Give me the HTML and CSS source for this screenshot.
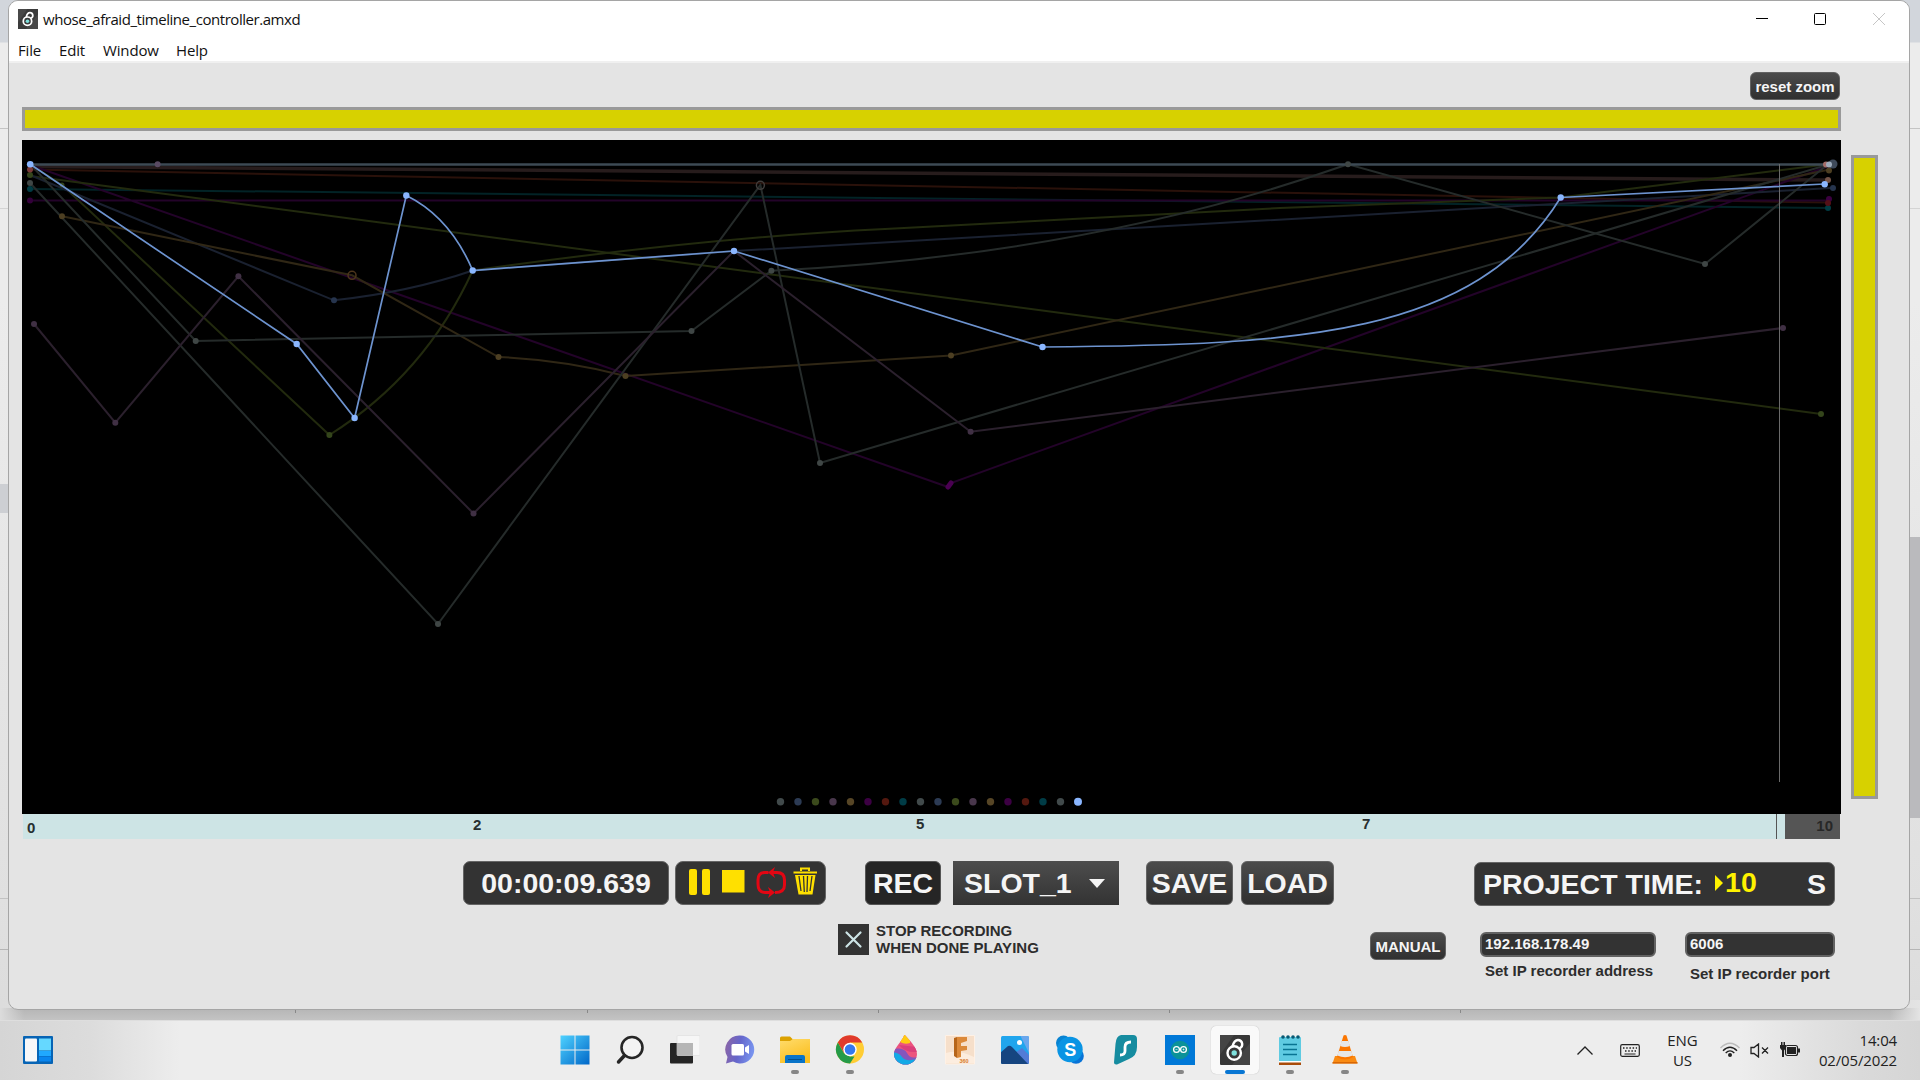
FILE: index.html
```html
<!DOCTYPE html>
<html lang="en">
<head>
<meta charset="utf-8">
<title>whose_afraid_timeline_controller.amxd</title>
<link rel="stylesheet" href="styles.css">
</head>
<body>
<main class="desktop">
  <section class="window">
    <header class="titlebar">
      <svg class="app-icon" viewBox="0 0 30 30"><rect width="30" height="30" fill="#3b3b3b"/><path d="M0 20L14 0H0zM30 8L12 30h18z" fill="#484848"/><g fill="none" stroke="#fff" stroke-width="2.6"><circle cx="14.2" cy="18.300" r="6.300"/><path d="M12.500 12C13.500 7 15 5.500 18 5.500a4.300 4.300 0 0 1 1.500 8.300"/></g><circle cx="14.200" cy="18.300" r="2.700" fill="#7ee0dc"/></svg>
      <span class="title">whose_afraid_timeline_controller.amxd</span>
      <svg class="win-buttons" viewBox="0 0 130 14"><path d="M0 6.500h12" stroke="#000"/><rect x="58.500" y="1.500" width="11" height="11" rx="1" fill="none" stroke="#000"/><path d="M117 1l12 12M129 1l-12 12" stroke="#c6c6c6"/></svg>
    </header>
    <nav class="menu"><span class="m-file">File</span><span class="m-edit">Edit</span><span class="m-window">Window</span><span class="m-help">Help</span></nav>
    <div class="patch">
      <div class="zoom-row"><button class="btn small reset">reset zoom</button></div>
      <div class="editor">
        <div class="timeline">
          <div class="hscroll"></div>
          <svg class="plot" viewBox="22 140 1819 674">
            <g fill="none" stroke-width="2">
              <path stroke="#271c1c" stroke-width="3.500" d="M30 166.500L1827 180"/>
              <path stroke="#2a110a" d="M30 169.500L1560 198L1828 202.500"/>
              <path stroke="#022326" d="M30 189L1828 208"/>
              <path stroke="#230329" d="M30 200.500H1829M30 165L948 487L951 483L1829 166"/>
              <path stroke="#222a0e" d="M30 176L1821 414M30 164L62 185L329.400 435Q425 375 472.700 270.500Q700 238 885 229T1280 208Q1430 203 1560 197.500L1830 164"/>
              <path stroke="#1a2130" d="M30 175L334 300.300Q410 292 472.700 270.500L734 251L1831 188"/>
              <path stroke="#302715" d="M62 216.300L352 275.300L498.500 357Q565 360 625.500 376L951 355.500L1827 170"/>
              <path stroke="#252b2a" d="M30 164L195.700 341L691.500 331L771.400 270.700Q1090 255 1348 164.300L1705 264L1827 165"/>
              <path stroke="#252b2a" d="M30 183L438 624L760.400 185L820 463L1827 165"/>
              <path stroke="#2b202d" d="M34 324L115.300 422.700L238.400 276.300L473.500 513.500L734 251L970.600 431.700L1783 328"/>
              <path stroke="#3d4a54" stroke-width="2.500" d="M30 164.500H1830"/>
            </g>
            <path d="M1779.500 164V782" stroke="#6a6a6a"/>
            <g fill="#3f4645"><circle cx="30" cy="183" r="3"/><circle cx="195.700" cy="341" r="3"/><circle cx="691.500" cy="331" r="3"/><circle cx="771.400" cy="270.700" r="3"/><circle cx="1348" cy="164.300" r="3"/><circle cx="1705" cy="264" r="3"/><circle cx="438" cy="624" r="3"/><circle cx="820" cy="463" r="3"/></g>
            <g fill="#403044"><circle cx="34" cy="324" r="3"/><circle cx="115.300" cy="422.700" r="3"/><circle cx="238.400" cy="276.300" r="3"/><circle cx="473.500" cy="513.500" r="3"/><circle cx="970.600" cy="431.700" r="3"/><circle cx="1783" cy="328" r="3"/></g>
            <circle cx="157.600" cy="164.300" r="3" fill="#594a62"/>
            <g fill="#4d3f22"><circle cx="62" cy="216.300" r="3"/><circle cx="498.500" cy="357" r="3"/><circle cx="625.500" cy="376" r="3"/><circle cx="951" cy="355.500" r="3"/><circle cx="1829" cy="170.500" r="3"/></g>
            <g fill="#34451b"><circle cx="30" cy="175" r="3"/><circle cx="62" cy="185" r="2.500"/><circle cx="329.400" cy="435" r="3"/><circle cx="1821" cy="414" r="3"/></g>
            <circle cx="334" cy="300.300" r="3" fill="#26344d"/><circle cx="1833" cy="188" r="3" fill="#26344d"/>
            <path d="M948 487L951 483" stroke="#4a0052" stroke-width="5" stroke-linecap="round"/>
            <circle cx="30" cy="200.500" r="3" fill="#33003a"/><circle cx="1829" cy="199" r="3" fill="#3b0040"/>
            <circle cx="30" cy="189" r="3" fill="#003c44"/><circle cx="1828" cy="208" r="3" fill="#003c44"/>
            <circle cx="30" cy="169.500" r="3" fill="#7a3938"/><circle cx="1828" cy="203" r="3" fill="#541018"/>
            <circle cx="1828" cy="180" r="3" fill="#735347"/>
            <circle cx="1833" cy="164" r="4.500" fill="#3e4a5b"/><circle cx="1826" cy="164.500" r="3" fill="#a36c69"/><circle cx="1829" cy="164.500" r="3" fill="#9ba9ba"/>
            <circle cx="352" cy="275.300" r="4" fill="none" stroke="#4d351c" stroke-width="1.500"/><circle cx="760.400" cy="185.300" r="4" fill="none" stroke="#3f3c3b" stroke-width="1.500"/>
            <path d="M30.200 164.300L296.700 344L354.600 418L406.300 195.500Q450 217 472.700 270.500L734 251L1042.500 347C1300 345 1475 336 1560.700 197.500L1824.700 184" fill="none" stroke="#6d93cf" stroke-width="1.700"/>
            <g fill="#8ab6ff"><circle cx="30.200" cy="164.300" r="3.300"/><circle cx="296.700" cy="344" r="3.200"/><circle cx="354.600" cy="418" r="3.200"/><circle cx="406.300" cy="195.500" r="3.200"/><circle cx="472.700" cy="270.500" r="3.200"/><circle cx="734" cy="251" r="3.200"/><circle cx="1042.500" cy="347" r="3.200"/><circle cx="1560.700" cy="197.500" r="3.200"/><circle cx="1824.700" cy="184.200" r="3.200"/></g>
            <g fill="#414a4b"><circle cx="780.500" cy="801.800" r="3.700"/><circle cx="920.500" cy="801.800" r="3.700"/><circle cx="1060.500" cy="801.800" r="3.700"/></g>
            <g fill="#2c3b54"><circle cx="798" cy="801.800" r="3.700"/><circle cx="938" cy="801.800" r="3.700"/></g>
            <g fill="#3b4a1c"><circle cx="815.500" cy="801.800" r="3.700"/><circle cx="955.500" cy="801.800" r="3.700"/></g>
            <g fill="#49374c"><circle cx="833" cy="801.800" r="3.700"/><circle cx="973" cy="801.800" r="3.700"/></g>
            <g fill="#574626"><circle cx="850.500" cy="801.800" r="3.700"/><circle cx="990.500" cy="801.800" r="3.700"/></g>
            <g fill="#3c0043"><circle cx="868" cy="801.800" r="3.700"/><circle cx="1008" cy="801.800" r="3.700"/></g>
            <g fill="#54180f"><circle cx="885.500" cy="801.800" r="3.700"/><circle cx="1025.500" cy="801.800" r="3.700"/></g>
            <g fill="#003c46"><circle cx="903" cy="801.800" r="3.700"/><circle cx="1043" cy="801.800" r="3.700"/></g>
            <circle cx="1078" cy="801.800" r="4" fill="#8ab6ff"/>
          </svg>
          <div class="ruler"><span class="t0">0</span><span class="t2">2</span><span class="t5">5</span><span class="t7">7</span><span class="cursor"></span><span class="t10">10</span></div>
        </div>
        <div class="vscroll"></div>
      </div>
      <div class="controls">
        <div class="panel timer">00:00:09.639</div>
        <div class="panel transport">
          <svg viewBox="0 0 151 44"><g fill="#ffe000"><rect x="14" y="8" width="8" height="26" rx="2"/><rect x="27" y="8" width="8" height="26" rx="2"/><rect x="47" y="9" width="22.500" height="22.500"/></g>
          <g fill="none" stroke="#e30613" stroke-width="3"><path d="M93.500 11.500H90C85 11.500 83 14.500 83 19V23C83 29 86 31.500 90 31.500H95"/><path d="M95 11.500H102C107 11.500 109.500 14 109.500 19V24C109.500 29.500 106 31.500 100 31.500"/></g><path d="M93 11.500L100 6l-2 5.500 2 5.500zM100 31.500L93 26l2 5.500-2 5.500z" fill="#e30613"/>
          <path d="M118.500 11.500h23.500M126 10V7.500h8V10" fill="none" stroke="#ffe000" stroke-width="2"/><path d="M120 14h20.500l-3 19.500h-14z" fill="#ffe000"/><path d="M124 15l2 15M128.500 15l.800 16M132.500 15l-.500 16M137 15l-2 15" stroke="#333" stroke-width="1.300"/></svg>
        </div>
        <button class="btn rec">REC</button>
        <div class="select">SLOT_1<svg viewBox="0 0 16 9"><path d="M0 0h16L8 9z" fill="#f5f5f5"/></svg></div>
        <button class="btn save">SAVE</button>
        <button class="btn load">LOAD</button>
        <div class="panel project"><span>PROJECT TIME:</span><svg viewBox="0 0 8 16"><path d="M0 0l8 8-8 8z" fill="#fff200"/></svg><span class="value">10</span><span class="unit">S</span></div>
      </div>
      <div class="options">
        <svg class="check" viewBox="0 0 31 31"><rect width="31" height="31" fill="#333"/><path d="M8.500 8.500l14 14M22.500 8.500l-14 14" stroke="#cde4e6" stroke-width="2.200" stroke-linecap="round"/></svg>
        <p class="stop">STOP RECORDING<br>WHEN DONE PLAYING</p>
        <button class="btn small manual">MANUAL</button>
        <div class="field ip"><div class="box">192.168.178.49</div><div class="label">Set IP recorder address</div></div>
        <div class="field port"><div class="box">6006</div><div class="label">Set IP recorder port</div></div>
      </div>
    </div>
  </section>
</main>
<footer class="taskbar">
  <svg class="widgets" viewBox="0 0 30 28"><rect width="30" height="28" rx="1" fill="#0764b5"/><rect x="2" y="2.500" width="12" height="23" rx="1" fill="#f7f7f8"/><path fill="#65d8ff" d="M16 2.500h12v12H16z"/><path fill="#20a8ff" d="M16 15H28V20H16z"/><path fill="#0985ee" d="M16 20.500h12v5H16z"/></svg>
  <div class="apps">
    <div class="app"><svg viewBox="0 0 30 30"><defs><linearGradient id="w" x2="1" y2="1"><stop stop-color="#4fd2ff"/><stop offset="1" stop-color="#0067c8"/></linearGradient></defs><path fill="url(#w)" d="M.500.500H14.500V14.500H.500zM15.500.500h14v14h-14zM.500 15.500h14v14H.500zM15.500 15.500h14v14h-14z"/></svg></div>
    <div class="app"><svg viewBox="0 0 30 30"><circle cx="17" cy="12.500" r="10.500" fill="#f3f3f3" stroke="#262626" stroke-width="2.600"/><path d="M9.500 20.500L3.500 27" stroke="#262626" stroke-width="3.500" stroke-linecap="round"/></svg></div>
    <div class="app"><svg viewBox="0 0 30 30"><rect y="8" width="23" height="20.500" rx="1" fill="#252525"/><rect x="7" y=".500" width="23" height="20" rx="1" fill="#f6f6f6" stroke="#ddd" stroke-width=".600"/><path d="M7 8h16v12.500H7z" fill="#b5b5b5"/></svg></div>
    <div class="app"><svg viewBox="0 0 30 30"><defs><linearGradient id="c" x1="0" y1=".2" x2="1" y2=".4"><stop stop-color="#8b65a6"/><stop offset=".5" stop-color="#6566cb"/><stop offset="1" stop-color="#7894ef"/></linearGradient></defs><path fill="url(#c)" d="M15 .500a14 14 0 1 1-7 26L1 28.500 2.500 22A14 14 0 0 1 15 .500z"/><rect x="6.500" y="9" width="12.500" height="11.500" rx="1.500" fill="#fff"/><path fill="#fff" d="M20 12.500l4-2.500v9l-4-2.500z"/></svg></div>
    <div class="app run"><svg viewBox="0 0 30 30"><defs><linearGradient id="f" x2=".5" y2="1"><stop stop-color="#ffdc6c"/><stop offset="1" stop-color="#fbbf20"/></linearGradient></defs><path fill="#dca100" d="M0 7V3Q0 1.500 1.500 1.500H10L13 4.500V8z"/><path fill="url(#f)" d="M0 6h10l3-2h17v24H0z"/><path fill="#0974c8" d="M5 28V22q0-2 2-2h16q2 0 2 2v6z"/><path stroke="#00508f" d="M8 24.500h14"/></svg></div>
    <div class="app run"><svg viewBox="0 0 30 30"><circle cx="15" cy="14.500" r="14" fill="#ffcd34"/><path fill="#e03a2c" d="M2.800 7.500A14 14 0 0 1 27.200 7.500H15L9 18z"/><path fill="#259b48" d="M2.800 7.500L9 18.200 15 21.500h4.500L15 28.500A14 14 0 0 1 2.800 7.500z"/><circle cx="15" cy="14.500" r="6.700" fill="#fff"/><circle cx="15" cy="14.500" r="5.300" fill="#3478ed"/></svg></div>
    <div class="app"><svg viewBox="0 0 30 30"><defs><clipPath id="drop"><path d="M14.500-.500C19 5 27 12 27 19a11.500 10.500 0 0 1-23 0C4 13 11 8 14.500-.500z"/></clipPath></defs><g clip-path="url(#drop)"><path fill="#ec547f" d="M0-2h30v34H0z"/><path fill="#ffcc12" d="M10-2h10v10q-5 2-10-1z"/><path fill="#db3f7b" d="M9 10q6 8 18 7v-5z"/><path fill="#8456bd" d="M3 14q11-2 14 4t10 4v8H0z"/><path fill="#12a9e6" d="M0 17q9 0 12 5t15 2v8H0z"/></g></svg></div>
    <div class="app"><svg viewBox="0 0 30 30"><path fill="#f6dfca" stroke="#fff1e5" d="M.500.500h29v28.500H.500z"/><path fill="#fceddf" d="M1 18q12-4 28 4v6H1z"/><path fill="#b6651a" d="M9 3L12 2v21l-3-2z"/><path fill="#db893a" d="M12 2h10v4l-6 2v3h6v4l-6 1v6l-4 1z"/><text x="14.500" y="28" font-size="5.500" font-weight="700" fill="#d77a2b">360</text></svg></div>
    <div class="app"><svg viewBox="0 0 30 30"><defs><clipPath id="ph"><rect x="1" y="1" width="28" height="28" rx="1.500"/></clipPath></defs><g clip-path="url(#ph)"><path fill="#20a5ed" d="M0 0h30v30H0z"/><path fill="#6aa7ed" d="M20 0h10v20z"/><path fill="#527bd6" d="M15 18l7-5 8 8v9H15z"/><path fill="#164580" d="M0 18L8 11q2-1 4 1l17 18H0z"/></g><circle cx="19.500" cy="7.500" r="2.500" fill="#fff"/></svg></div>
    <div class="app"><svg viewBox="0 0 30 30"><circle cx="8.500" cy="8" r="7.500" fill="#0883d2"/><circle cx="21" cy="21" r="7.800" fill="#0873d7"/><circle cx="15" cy="14.500" r="12.700" fill="#0994e4"/><text x="9.200" y="21" font-size="18" font-weight="700" fill="#fff">S</text></svg></div>
    <div class="app"><svg viewBox="0 0 30 30"><path fill="#168ca0" d="M11 0h12q4 0 4 4v8q0 9-8 12L7 29.500q-3 .500-3-2L5.500 9Q6 1 11 0z"/><path d="M21 7q-6 0-6 5v4q0 4-5 4" fill="none" stroke="#fff" stroke-width="2.800"/></svg></div>
    <div class="app run"><svg viewBox="0 0 30 30"><path fill="#0078d7" d="M0 0h30v30H0z"/><circle cx="15" cy="15" r="9.300" fill="#0b9298"/><g fill="none" stroke="#fff" stroke-width="1.300"><circle cx="11.500" cy="14.500" r="2.900"/><circle cx="18.500" cy="14.500" r="2.900"/><path d="M10.500 14.500h2M17.500 14.500h2M18.500 13.500v2" stroke-width=".600"/></g></svg></div>
    <div class="app active"><svg viewBox="0 0 30 30"><rect width="30" height="30" rx="1" fill="#373737"/><path d="M0 20L14 0H0zM30 8L12 30h18z" fill="#444"/><g fill="none" stroke="#fff" stroke-width="2.400"><circle cx="14.200" cy="18" r="6.700"/><path d="M12.300 12C13.500 7 15 5 18 5a4.300 4.300 0 0 1 1.500 8.300"/></g><circle cx="14.200" cy="18" r="2.700" fill="#7ee0dc"/></svg></div>
    <div class="app run"><svg viewBox="0 0 30 30"><rect x="4" y="2" width="22" height="25" rx="1" fill="#5fcbe2"/><path fill="#a84c0b" d="M4 27h22v3H4z"/><path fill="#fff" d="M4 26h22v1.500H4z"/><path d="M8 9.500h14M8 14.500h14M8 19.500h14" stroke="#087492" stroke-width="1.600"/><g fill="#065873"><circle cx="8" cy="2" r="1.800"/><circle cx="13" cy="2" r="1.800"/><circle cx="18" cy="2" r="1.800"/><circle cx="23" cy="2" r="1.800"/></g></svg></div>
    <div class="app run"><svg viewBox="0 0 30 30"><path fill="#f98b13" d="M5 21h20l2.500 7.500h-25z"/><path fill="#fb7600" d="M13.500.500q1.500-1 3 0L23 22q-8 5-16 0z"/><path fill="#e7e7e7" d="M11.600 6h6.800l1.500 5q-5 2-9.800 0zM8.600 16h12.800l1.300 4.500q-7.500 3.500-15.400 0z"/><path fill="#d86705" d="M2.500 27h25v1.500h-25z"/></svg></div>
  </div>
  <svg class="chevron" viewBox="0 0 16 9"><path d="M.500 8.500L8 1l7.500 7.500" fill="none" stroke="#222" stroke-width="1.300"/></svg>
  <svg class="keyboard" viewBox="0 0 20 13"><rect x=".700" y=".700" width="18.600" height="11.600" rx="1.500" fill="none" stroke="#222" stroke-width="1.200"/><path d="M3 4h14M5 7h11" stroke="#222" stroke-width="1.500" stroke-dasharray="1.500 1.700"/><path d="M4.500 10h11" stroke="#222"/></svg>
  <div class="lang">ENG<br>US</div>
  <svg class="wifi" viewBox="0 0 20 16"><g fill="none" stroke-width="1.400"><path d="M.500 6Q10-3.500 19.500 6" stroke="#bbb"/><path d="M3 8.700q7-7 14 0M5.700 11q4.300-4.300 8.600 0" stroke="#222"/></g><circle cx="10" cy="13" r="2" fill="#222"/></svg>
  <svg class="sound" viewBox="0 0 20 15"><path d="M1 4.500h3L8.500 1v13L4 10.500H1zM12 4.500l6 6M18 4.500l-6 6" fill="none" stroke="#222" stroke-width="1.300"/></svg>
  <svg class="battery" viewBox="0 0 20 16"><rect x="5.500" y="3.500" width="12" height="10" rx="2" fill="none" stroke="#222" stroke-width="1.200"/><path fill="#222" d="M7 5h9v7H7zM18 6.500h2v4h-2zM0 3h1V0h1.500v3h1V0H5v3h1v3L4 8.500V15H2V8.500L0 6z"/></svg>
  <div class="clock">14:04<br>02/05/2022</div>
</footer>
</body>
</html>
```
FILE: styles.css
```css
* { box-sizing: border-box; }
body { margin: 0; width: 1920px; height: 1080px; overflow: hidden; display: flex; flex-direction: column; font-family: "Liberation Sans", Arial, sans-serif; background: #ededed; }
svg { display: block; flex: none; }
button { border: 0; padding: 0; font: inherit; }

.desktop { height: 1020px; padding: 0 10px 0 8px; background:
  linear-gradient(#cdcfd3, #cdcfd3) 0 484px / 9px 29px no-repeat,
  linear-gradient(#bababd, #bababd) 100% 537px / 11px 281px no-repeat,
  linear-gradient(#c4c4c4, #c4c4c4) 0 128px / 100% 1px no-repeat,
  linear-gradient(#d4d4d4, #d4d4d4) 0 208px / 100% 1px no-repeat,
  linear-gradient(#c2c2c2, #c2c2c2) 0 898px / 100% 1px no-repeat,
  linear-gradient(#b5b5b5, #b5b5b5) 0 949px / 100% 1px no-repeat,
  repeating-linear-gradient(90deg, transparent 0 295px, #888 295px 296px, transparent 296px 587px, #888 587px 588px, transparent 588px 878px, #888 878px 879px, transparent 879px 1169px, #888 1169px 1170px, transparent 1170px 1460px, #888 1460px 1461px, transparent 1461px 1920px) 0 1009px / 100% 4px no-repeat,
  linear-gradient(90deg, #dcdcdc, transparent 24px 1890px, #e4e4e4) 0 1000px / 100% 20px no-repeat,
  linear-gradient(#b5b5b5, #c3c3c3) 0 1008px / 100% 12px no-repeat,
  linear-gradient(#d2d6dc 0 42px, #ececec 43px 300px, #e0e0e0 900px, #dcdcdc); }
.window { height: 1010px; border: 1px solid #a5a5a5; border-radius: 10px; background: #e4e4e4; overflow: hidden; display: flex; flex-direction: column; }

.titlebar { height: 36px; background: #fff; display: flex; align-items: center; padding: 0 58px 0 9px; font: 15px "Open Sans", sans-serif; color: #111; }
.app-icon { width: 20px; height: 20px; }
.title { margin-left: 5px; letter-spacing: -.45px; }
.win-buttons { width: 130px; height: 14px; margin-left: auto; margin-right: -35px; }
.menu { height: 26px; background: #fff; border-bottom: 2px solid #f0f0f0; display: flex; padding-left: 9px; font: 15px/26px "Open Sans", sans-serif; letter-spacing: -.15px; color: #111; }
.m-file { width: 41px; }
.m-edit { width: 44px; }
.m-window { width: 73px; }

.patch { flex: 1; padding-left: 13px; }
.zoom-row { height: 44px; padding: 9px 69px 0 0; display: flex; justify-content: flex-end; }
.btn { display: flex; align-items: center; justify-content: center; height: 44px; border-radius: 6px; border: 1px solid #626262; background: linear-gradient(#4b4b4b, #303030); color: #f5f5f5; font-weight: 700; font-size: 28.5px; white-space: nowrap; }
.btn.small { height: 28px; font-size: 15px; border-radius: 6px; }
.reset { width: 90px; }

.editor { display: flex; gap: 10px; }
.timeline { width: 1819px; }
.hscroll { height: 24px; border: 3px solid #999; background: #d7d100; }
.plot { width: 1819px; height: 674px; margin-top: 9px; background: #000; }
.vscroll { width: 27px; height: 644px; margin-top: 48px; border: 3px solid #999; background: #d7d100; }
.ruler { height: 25px; margin: 0 1px; display: flex; background: #cde4e5; font: 700 15px/20px "Liberation Sans", sans-serif; color: #272f30; }
.t0 { width: 445px; padding: 4px 0 0 4px; }
.t2 { width: 444px; padding: 1px 0 0 5px; }
.t5 { width: 445px; padding-left: 4px; }
.t7 { width: 419px; padding-left: 5px; }
.cursor { width: 9px; border-left: 1px solid #555; }
.t10 { flex: 1; padding: 2px 7px 0 0; text-align: right; background: #555; color: #272727; }

.controls { display: flex; margin: 22px 0 0 441px; font-weight: 700; font-size: 28.5px; color: #f5f5f5; }
.panel { height: 44px; border: 1px solid #656565; border-radius: 7px; background: #333; }
.timer { width: 206px; line-height: 42px; text-align: center; }
.transport { width: 151px; margin-left: 6px; border-radius: 8px; }
.transport svg { width: 151px; height: 44px; margin: -1px; }
.rec { width: 76px; margin-left: 39px; background: #252525; border-color: #555; }
.select { width: 166px; height: 44px; margin-left: 12px; padding: 0 14px 0 11px; display: flex; align-items: center; justify-content: space-between; background: linear-gradient(#4d4d4d, #333); }
.select svg { width: 16px; height: 9px; }
.save { width: 87px; margin-left: 27px; }
.load { width: 93px; margin-left: 8px; }
.project { width: 361px; margin: 1px 0 0 140px; padding: 0 8px 0 8px; display: flex; align-items: center; }
.project svg { width: 8px; height: 16px; margin: -2px 2px 0 12px; }
.value { color: #fff200; margin-top: -3px; }
.unit { margin-left: auto; }

.options { display: flex; align-items: flex-start; margin: 16px 0 0 816px; font-size: 15px; font-weight: 700; color: #2d2d2d; }
.check { width: 31px; height: 31px; margin-top: 2px; }
.stop { width: 200px; margin: 0 0 0 7px; line-height: 17px; white-space: nowrap; }
.manual { width: 76px; margin: 10px 0 0 294px; }
.box { height: 25px; border: 2px solid #626262; border-radius: 6px; background: #333; color: #f5f5f5; padding-left: 3px; line-height: 20px; }
.label { padding: 5px 0 0 5px; line-height: 17px; white-space: nowrap; }
.field { margin-top: 10px; }
.ip { width: 176px; margin-left: 34px; }
.port { width: 150px; margin-left: 29px; }
.port .label { padding-top: 8px; }

.taskbar { height: 60px; display: flex; align-items: center; padding: 0 0 1px 23px; border-top: 1px solid #dedede; background: linear-gradient(90deg, #d5d5d5, #dcdcdc 90px, #ededed 180px, #ededed 1740px, #dadada 1860px, #d5d5d5); font: 16px/20px "Open Sans", sans-serif; color: #222; }
.widgets { width: 30px; height: 28px; }
.apps { display: flex; gap: 7px; margin-left: 498px; }
.app { width: 48px; height: 48px; padding: 9px 9px 0; border-radius: 5px; display: flex; flex-direction: column; justify-content: space-between; align-items: center; }
.app svg { width: 30px; height: 30px; font-family: "Liberation Sans", sans-serif; }
.run::after { content: ""; width: 8px; height: 4px; border-radius: 2px; background: #868686; }
.active { background: #f9f9f9; box-shadow: 0 0 1px #aaa; }
.active::after { content: ""; width: 20px; height: 4px; border-radius: 2px; background: #0876d3; }
.chevron { width: 16px; height: 9px; margin-left: 207.5px; }
.keyboard { width: 20px; height: 13px; margin-left: 27px; }
.lang { width: 40px; margin-left: 23px; text-align: center; font-size: 15px; }
.wifi { width: 20px; height: 16px; margin-left: 17px; }
.sound { width: 20px; height: 15px; margin-left: 10px; }
.battery { width: 20px; height: 16px; margin-left: 10px; }
.clock { flex: 1; padding-right: 23px; text-align: right; font-size: 15px; letter-spacing: -.15px; white-space: nowrap; }
```
